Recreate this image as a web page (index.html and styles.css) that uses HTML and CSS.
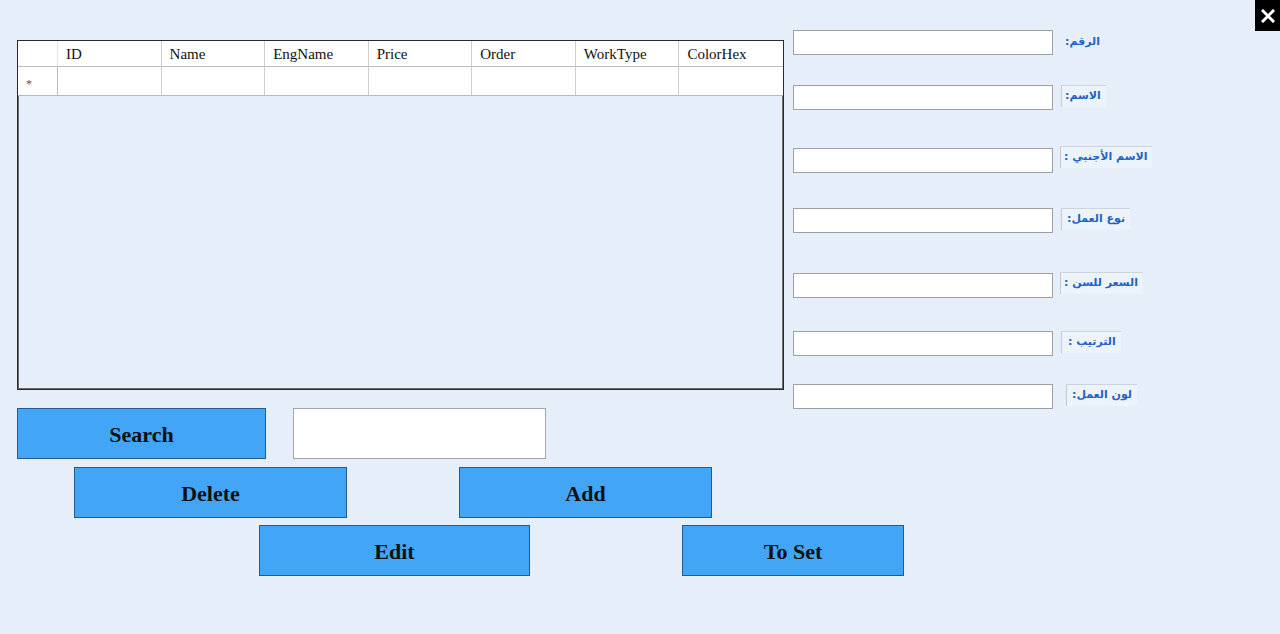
FILE: index.html
```html
<!DOCTYPE html>
<html lang="ar">
<head>
<meta charset="utf-8">
<title>Work Types</title>
<link rel="stylesheet" href="styles.css">
</head>
<body>
<button class="close" aria-label="close">
  <svg width="14" height="14" viewBox="0 0 14 14"><path d="M2 2 L12 12 M12 2 L2 12" stroke="#fff" stroke-width="3" stroke-linecap="square"/></svg>
</button>
<div class="form">
  <div class="left">
    <div class="grid">
      <div class="cell head corner"></div>
      <div class="cell head">ID</div>
      <div class="cell head">Name</div>
      <div class="cell head">EngName</div>
      <div class="cell head">Price</div>
      <div class="cell head">Order</div>
      <div class="cell head">WorkType</div>
      <div class="cell head">ColorHex</div>
      <div class="cell rowhead">*</div>
      <div class="cell"></div>
      <div class="cell"></div>
      <div class="cell"></div>
      <div class="cell"></div>
      <div class="cell"></div>
      <div class="cell"></div>
      <div class="cell"></div>
    </div>
    <div class="btn-row row1">
      <button class="btn btn-search">Search</button>
      <input class="search-box" type="text">
    </div>
    <div class="btn-row row2">
      <button class="btn btn-delete">Delete</button>
      <button class="btn btn-add">Add</button>
    </div>
    <div class="btn-row row3">
      <button class="btn btn-edit">Edit</button>
      <button class="btn btn-toset">To Set</button>
    </div>
  </div>
  <div class="fields">
    <input class="field" type="text"><span class="lbl plain l1">الرقم:</span>
    <input class="field" type="text"><span class="lbl l2">الاسم:</span>
    <input class="field" type="text"><span class="lbl l3">الاسم الأجنبي :</span>
    <input class="field" type="text"><span class="lbl l4">نوع العمل:</span>
    <input class="field" type="text"><span class="lbl l5">السعر للسن :</span>
    <input class="field" type="text"><span class="lbl l6">الترتيب :</span>
    <input class="field" type="text"><span class="lbl l7">لون العمل:</span>
  </div>
</div>
</body>
</html>
```
FILE: styles.css
```css
html, body {
  margin: 0;
  padding: 0;
  background: #e6eff9;
  width: 1280px;
  height: 634px;
  overflow: hidden;
}
body {
  position: relative;
  font-family: "Liberation Serif", "Times New Roman", serif;
}
.close {
  position: absolute;
  top: 0;
  right: 0;
  width: 25px;
  height: 31px;
  background: #000;
  border: none;
  padding: 0;
  display: flex;
  align-items: center;
  justify-content: center;
}
.form {
  display: flex;
  align-items: flex-start;
}
.left {
  width: 767px;
  padding-left: 17px;
  padding-top: 40px;
  flex: none;
}
.grid {
  box-sizing: border-box;
  width: 767px;
  height: 350px;
  border: 1px solid #2a2a2a;
  box-shadow: inset 0 0 0 1px #6a6a6a;
  display: grid;
  grid-template-columns: 40px repeat(7, 1fr);
  grid-template-rows: 26px 29px;
  align-content: start;
}
.cell {
  background: #fff;
  border-right: 1px solid #cfcfcf;
  border-bottom: 1px solid #b9b9b9;
  font-size: 15px;
  color: #111;
  padding-left: 8px;
  display: flex;
  align-items: center;
}
.cell:nth-child(8), .cell:nth-child(16) {
  border-right: none;
}
.head {
  border-bottom: 1px solid #bdbdbd;
  padding-top: 1px;
}
.corner {
  border-right: 1px solid #e4e4e4;
}
.rowhead {
  font-size: 12px;
  color: #555;
  padding-left: 8px;
  padding-top: 7px;
  border-right: 1px solid #b9b9b9;
}
.btn-row {
  display: flex;
}
.row1 { margin-top: 18px; }
.row2 { margin-top: 8px; }
.row3 { margin-top: 7px; }
.btn {
  height: 51px;
  background: #42a5f5;
  border: 1px solid #1f5c94;
  font-family: "Liberation Serif", "Times New Roman", serif;
  font-weight: bold;
  font-size: 22px;
  color: #111;
  padding: 3px 0 0 0;
  flex: none;
}
.btn-search { width: 249px; }
.search-box {
  margin-left: 27px;
  width: 253px;
  height: 51px;
  box-sizing: border-box;
  border: 1px solid #a5a5a5;
  background: #fff;
}
.btn-delete { width: 273px; margin-left: 57px; }
.btn-add { width: 253px; margin-left: 112px; }
.btn-edit { width: 271px; margin-left: 242px; }
.btn-toset { width: 222px; margin-left: 152px; }
.fields {
  margin-left: 9px;
  padding-top: 30px;
  display: grid;
  grid-template-columns: 260px auto;
  grid-template-rows: 55px 63px 60px 65px 58px 53px 25px;
  align-items: start;
  justify-items: start;
}
.field {
  box-sizing: border-box;
  width: 260px;
  height: 25px;
  border: 1px solid #a0a0a0;
  background: #fff;
  margin: 0;
}
.lbl {
  direction: rtl;
  font-family: "DejaVu Sans", "Noto Sans", sans-serif;
  font-weight: bold;
  font-size: 11px;
  color: #1f63c6;
  background: #edf3fa;
  border-top: 1px solid #cfd5dd;
  border-left: 1px solid #c3c9d1;
  padding: 3px 5px 4px 3px;
  line-height: 14px;
  white-space: nowrap;
}
.plain {
  background: transparent;
  border: none;
  margin-left: 9px;
  margin-top: 2px;
}
.l2 { margin-left: 8px; }
.l3 { margin-left: 7px; margin-top: -2px; }
.l4 { margin-left: 8px; padding-left: 5px; }
.l5 { margin-left: 7px; margin-top: -1px; }
.l6 { margin-left: 8px; padding-left: 6px; }
.l7 { margin-left: 13px; padding-left: 5px; }
```
